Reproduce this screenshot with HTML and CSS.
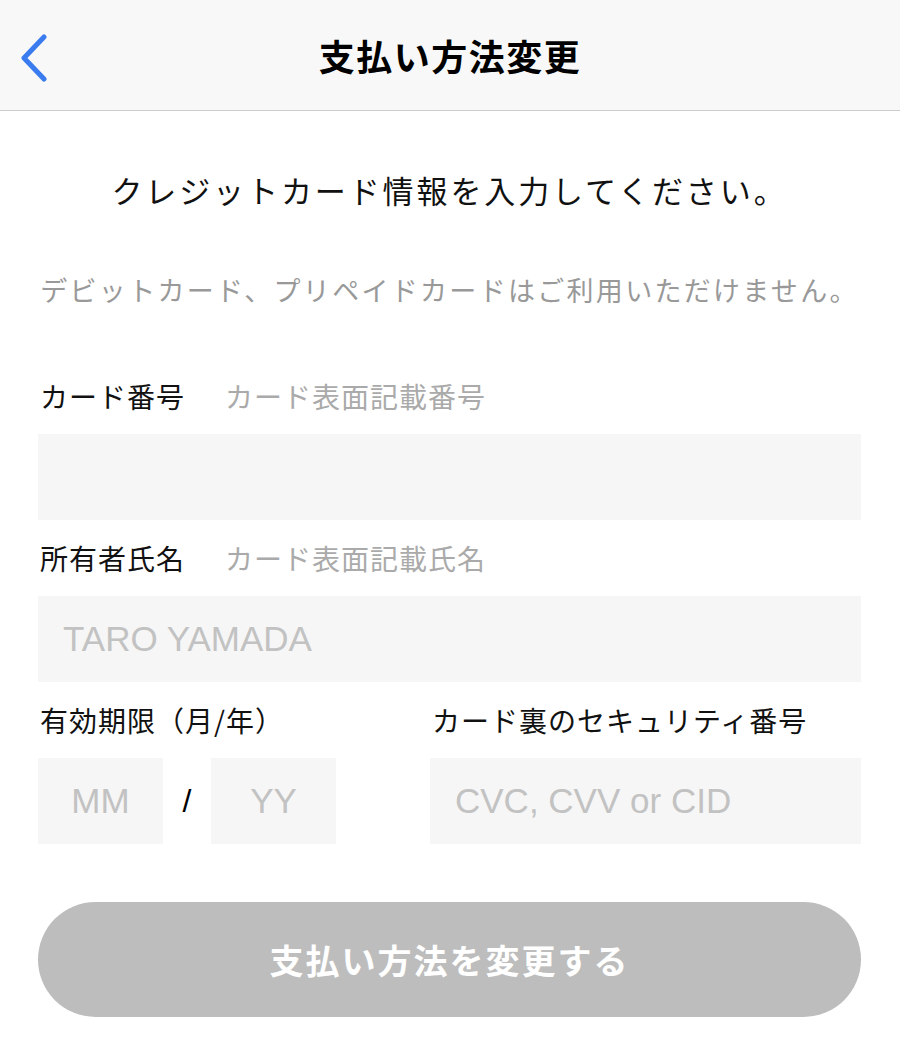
FILE: index.html
```html
<!DOCTYPE html>
<html lang="ja">
<head>
<meta charset="utf-8">
<title>支払い方法変更</title>
<link rel="stylesheet" href="styles.css">
</head>
<body>
<header class="nav">
  <a class="back" href="#" aria-label="戻る">
    <svg width="30" height="50" viewBox="0 0 30 50"><path d="M24 5 L4 26 L24 47" fill="none" stroke="#3a7bf0" stroke-width="5" stroke-linecap="round" stroke-linejoin="round"/></svg>
  </a>
  <h1 class="nav-title">支払い方法変更</h1>
</header>
<main class="content">
  <p class="lead">クレジットカード情報を入力してください。</p>
  <p class="note">デビットカード、プリペイドカードはご利用いただけません。</p>

  <div class="field">
    <div class="label"><span>カード番号</span><span class="hint">カード表面記載番号</span></div>
    <input class="box" type="text" aria-label="カード番号">
  </div>

  <div class="field">
    <div class="label"><span>所有者氏名</span><span class="hint">カード表面記載氏名</span></div>
    <input class="box" type="text" placeholder="TARO YAMADA">
  </div>

  <div class="row">
    <div class="field expiry">
      <div class="label"><span>有効期限（月/年）</span></div>
      <div class="exp-inputs">
        <input class="box small" type="text" placeholder="MM">
        <span class="slash">/</span>
        <input class="box small" type="text" placeholder="YY">
      </div>
    </div>
    <div class="field cvc">
      <div class="label"><span>カード裏のセキュリティ番号</span></div>
      <input class="box" type="text" placeholder="CVC, CVV or CID">
    </div>
  </div>

  <button class="submit" type="button">支払い方法を変更する</button>
</main>
</body>
</html>
```
FILE: styles.css
```css
html, body {
  margin: 0;
  padding: 0;
  background: #ffffff;
}
body {
  font-family: "Noto Sans CJK JP", "Noto Sans", sans-serif;
  color: #111111;
}
.nav {
  position: relative;
  height: 110px;
  background: #f8f8f8;
  border-bottom: 1px solid #cccccc;
  display: flex;
  align-items: center;
  justify-content: center;
}
.back {
  position: absolute;
  left: 20px;
  top: 32px;
  display: block;
  width: 30px;
  height: 50px;
}
.back svg { display: block; }
.nav-title {
  margin: 0;
  font-size: 36px;
  font-weight: 700;
  letter-spacing: 1.5px;
  line-height: 48px;
  color: #000;
}
.content {
  padding: 0 39px 0 38px;
}
.lead {
  margin: 55px 0 0;
  text-align: center;
  font-size: 31px;
  letter-spacing: 2.9px;
  line-height: 48px;
  color: #111;
}
.note {
  margin: 56px 0 0;
  text-align: center;
  font-size: 27px;
  letter-spacing: 2.3px;
  line-height: 40px;
  color: #999999;
  white-space: nowrap;
}
.field {
  margin-top: 18px;
}
.note + .field {
  margin-top: 66px;
}
.label {
  display: flex;
  gap: 40px;
  padding-left: 2px;
  font-size: 28px;
  letter-spacing: 1px;
  line-height: 40px;
  color: #111;
  margin-bottom: 18px;
  white-space: nowrap;
}
.hint {
  color: #aaaaaa;
}
.box {
  display: block;
  box-sizing: border-box;
  width: 100%;
  height: 86px;
  margin: 0;
  border: none;
  outline: none;
  background: #f6f6f6;
  padding: 0 24px 0 25px;
  font-family: "Liberation Sans", Arial, sans-serif;
  font-size: 35px;
  color: #333;
}
.box::placeholder {
  color: #c2c2c2;
}
.row {
  display: flex;
  gap: 94px;
}
.expiry {
  width: 298px;
  flex: none;
}
.cvc {
  flex: 1;
  min-width: 0;
}
.exp-inputs {
  display: flex;
  align-items: center;
}
.box.small {
  width: 125px;
  padding: 0;
  text-align: center;
}
.slash {
  width: 48px;
  text-align: center;
  font-family: "Liberation Sans", Arial, sans-serif;
  font-size: 32px;
  color: #000;
}
.submit {
  display: block;
  width: 100%;
  height: 115px;
  margin-top: 58px;
  border: none;
  border-radius: 58px;
  background: #bdbdbd;
  color: #ffffff;
  font-family: "Noto Sans CJK JP", "Noto Sans", sans-serif;
  font-size: 34px;
  font-weight: 700;
  letter-spacing: 2px;
  padding: 0;
}
```
